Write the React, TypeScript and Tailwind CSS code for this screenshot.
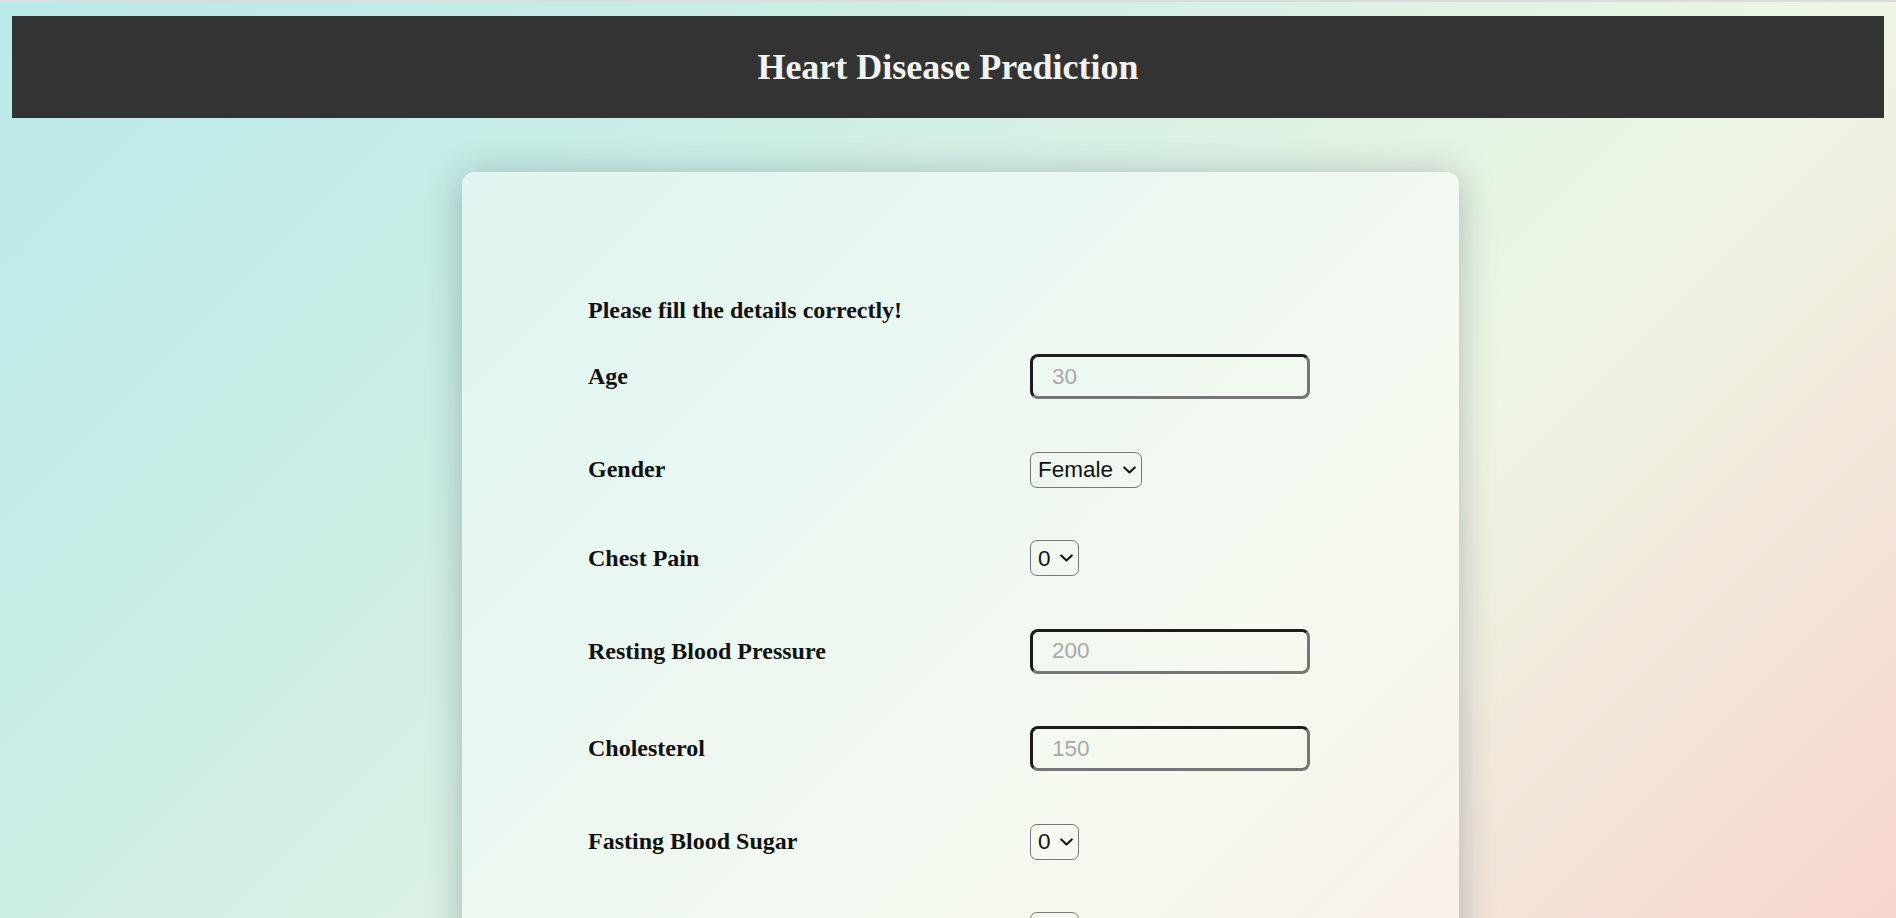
import React from "react";

const serif = "font-['Liberation_Serif','Times_New_Roman',serif]";
const sans = "font-['Liberation_Sans',Arial,sans-serif]";

function Chevron() {
  return (
    <svg
      className="pointer-events-none absolute right-[6px] top-1/2 -translate-y-1/2"
      width="13"
      height="8"
      viewBox="0 0 13 8"
      fill="none"
    >
      <path d="M1.2 1.4 L6.5 6.4 L11.8 1.4" stroke="#111" strokeWidth="2" strokeLinecap="round" strokeLinejoin="round" />
    </svg>
  );
}

function TextInput({ placeholder }: { placeholder: string }) {
  return (
    <input
      type="text"
      placeholder={placeholder}
      className={`w-[280px] h-[45px] rounded-[8px] border-[3px] border-solid border-t-[#1c1c1c] border-l-[#1c1c1c] border-b-[#767676] border-r-[#767676] bg-transparent pl-[19px] pr-2 text-[22.5px] text-[#111] ${sans} placeholder:text-[#a9a9a9] outline-none`}
    />
  );
}

function Select({ options }: { options: string[] }) {
  return (
    <div className="relative inline-block">
      <select
        className={`appearance-none h-[36px] rounded-[7px] border border-solid border-[#767676] bg-transparent pl-[7px] pr-[27px] py-0 text-[22.5px] leading-[normal] text-[#111] ${sans} outline-none`}
        defaultValue={options[0]}
      >
        {options.map((o) => (
          <option key={o} value={o}>
            {o}
          </option>
        ))}
      </select>
      <Chevron />
    </div>
  );
}

type Row = { label: string; kind: "input"; ph: string } | { label: string; kind: "select"; options: string[] };

const rows: Row[] = [
  { label: "Age", kind: "input", ph: "30" },
  { label: "Gender", kind: "select", options: ["Female", "Male"] },
  { label: "Chest Pain", kind: "select", options: ["0", "1", "2", "3"] },
  { label: "Resting Blood Pressure", kind: "input", ph: "200" },
  { label: "Cholesterol", kind: "input", ph: "150" },
  { label: "Fasting Blood Sugar", kind: "select", options: ["0", "1"] },
  { label: "Resting ECG", kind: "select", options: ["0", "1", "2"] },
  { label: "Max Heart Rate", kind: "input", ph: "150" },
  { label: "Exercise Induced Angina", kind: "select", options: ["0", "1"] },
  { label: "Oldpeak", kind: "input", ph: "1.5" },
  { label: "Slope", kind: "select", options: ["0", "1", "2"] },
  { label: "Number of Major Vessels", kind: "select", options: ["0", "1", "2", "3"] },
  { label: "Thal", kind: "select", options: ["0", "1", "2", "3"] },
];

export default function App() {
  return (
    <div
      className={`min-h-screen bg-fixed bg-[linear-gradient(135deg,#b9e9e9_0%,#cdeee5_33%,#eef6e3_67%,#f7d5cf_100%)] ${serif} pb-10`}
    >
      <div className="h-[2px] bg-[#dcdcdc]" />
      <header className="mx-[12px] mt-[14px] h-[102px] bg-[#333333] flex items-center justify-center">
        <h1 className={`text-[36px] font-bold leading-[41px] text-[#f2f2f2] ${serif}`}>Heart Disease Prediction</h1>
      </header>
      <main className="mt-[54px] ml-[462px] w-[997px] rounded-[12px] bg-white/45 shadow-[0_4px_36px_rgba(20,40,60,0.28)] pt-[125px] pb-[80px] pl-[126px]">
        <h2 className="text-[24px] font-bold leading-[27px] text-[#111]">Please fill the details correctly!</h2>
        <form className="mt-[30px] flex flex-col gap-[52.5px]" onSubmit={(e) => e.preventDefault()}>
          {rows.map((r) => (
            <div key={r.label} className="flex items-center">
              <label className="w-[442px] shrink-0 text-[24px] font-bold leading-[27px] text-[#111]">{r.label}</label>
              {r.kind === "input" ? <TextInput placeholder={r.ph} /> : <Select options={r.options} />}
            </div>
          ))}
          <div className="flex">
            <button
              type="submit"
              className={`h-[45px] px-6 rounded-[8px] bg-[#333333] text-[22px] text-white ${sans}`}
            >
              Predict
            </button>
          </div>
        </form>
      </main>
    </div>
  );
}
